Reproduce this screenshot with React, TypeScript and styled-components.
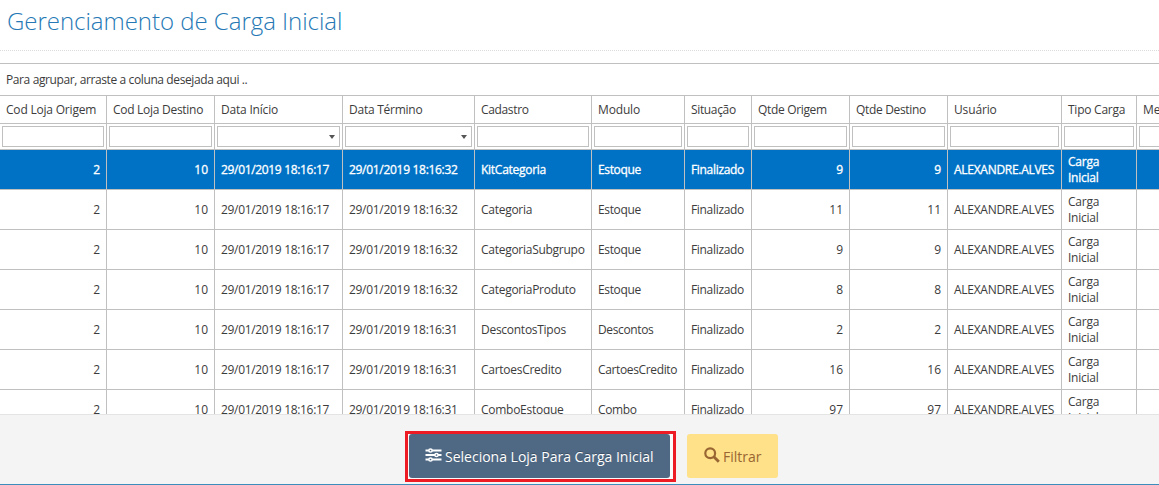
import React from "react";
import styled, { createGlobalStyle } from "styled-components";

const Global = createGlobalStyle`
  * { box-sizing: border-box; }
  body { margin: 0; background: #fff; overflow: hidden; }
`;

const Page = styled.div`
  display: flex;
  flex-direction: column;
  height: 485px;
  width: 100%;
  overflow: hidden;
  font-family: "Open Sans", "Noto Sans", sans-serif;
  font-size: 12px;
  color: #3c3c3c;
`;

const Header = styled.header`
  flex: none;
  height: 51px;
  padding: 3px 0 0 7px;
  border-bottom: 1px dotted #dcdcdc;
  margin-bottom: 12px;
`;

const Title = styled.h1`
  margin: 0;
  font-size: 24px;
  line-height: 36px;
  font-weight: 300;
  letter-spacing: -0.03px;
  color: #2679b5;
  white-space: nowrap;
`;

const Grid = styled.section`
  flex: 1;
  min-height: 0;
  overflow: hidden;
  border-top: 1px solid #c0c0c0;
`;

const GroupPanel = styled.div`
  height: 32px;
  padding-left: 6px;
  line-height: 31px;
  border-bottom: 1px solid #c0c0c0;
  white-space: nowrap;
`;

const Row = styled.div<{ $height: number; $selected?: boolean }>`
  display: grid;
  grid-template-columns: 107px 108px 128px 132px 117px 93px 67px 98px 98px 114px 75px 60px;
  width: 1197px;
  height: ${(p) => p.$height}px;
  background: ${(p) => (p.$selected ? "#0072c6" : "#fff")};
  color: ${(p) => (p.$selected ? "#fff" : "#3c3c3c")};
  -webkit-text-stroke: ${(p) => (p.$selected ? "0.3px #fff" : "0")};
`;

const Cell = styled.div<{ $right?: boolean }>`
  display: flex;
  align-items: center;
  justify-content: ${(p) => (p.$right ? "flex-end" : "flex-start")};
  padding: 0 6px;
  min-width: 0;
  line-height: 16px;
  border-right: 1px solid #c0c0c0;
  border-bottom: 1px solid #c0c0c0;
`;

const Label = styled.span<{ $spacing: number; $wrap?: boolean }>`
  letter-spacing: ${(p) => p.$spacing}px;
  white-space: ${(p) => (p.$wrap ? "normal" : "nowrap")};
`;

const FilterCell = styled.div`
  padding: 2px;
  border-right: 1px solid #c0c0c0;
  border-bottom: 1px solid #c0c0c0;
`;

const FilterBox = styled.div`
  display: flex;
  align-items: center;
  justify-content: flex-end;
  height: 21px;
  padding-right: 4px;
  border: 1px solid #c0c0c0;
`;

const Caret = styled.i`
  border: 3.5px solid transparent;
  border-top: 4px solid #555;
  border-bottom: 0;
`;

const Footer = styled.footer`
  flex: none;
  display: flex;
  align-items: flex-start;
  height: 71px;
  padding: 16px 0 0 405px;
  gap: 11px;
  background: #f4f4f4;
  border-top: 1px solid #e4e4e4;
  border-bottom: 1px solid #3d8dbc;
`;

const Highlight = styled.div`
  width: 271px;
  height: 51px;
  border: 3px solid #ed1c24;
  padding: 0 3px 0 1px;
  background: #fafafa;
`;

const Button = styled.button<{ $kind: "primary" | "filter" }>`
  display: flex;
  align-items: center;
  width: ${(p) => (p.$kind === "primary" ? 261 : 91)}px;
  height: 44px;
  margin: ${(p) => (p.$kind === "primary" ? "0" : "3px 0 0")};
  padding: 0 0 0 ${(p) => (p.$kind === "primary" ? 16 : 17)}px;
  gap: 3px;
  border: 0;
  border-radius: 3px;
  font-family: inherit;
  font-size: 14px;
  white-space: nowrap;
  color: ${(p) => (p.$kind === "primary" ? "#fff" : "#996633")};
  background: ${(p) => (p.$kind === "primary" ? "#4f6984" : "#fee188")};
  text-shadow: ${(p) => (p.$kind === "primary" ? "0 -1px 0 rgba(0,0,0,.25)" : "none")};
  svg { flex: none; display: block; margin-top: -2px; }
`;

type Column = { name: string; head: number; body: number; right?: boolean; menu?: boolean };

const columns: Column[] = [
  { name: "Cod Loja Origem", head: -0.2, body: 0, right: true },
  { name: "Cod Loja Destino", head: -0.28, body: 0, right: true },
  { name: "Data Início", head: -0.2, body: -0.33, menu: true },
  { name: "Data Término", head: -0.25, body: -0.3, menu: true },
  { name: "Cadastro", head: -0.35, body: -0.27 },
  { name: "Modulo", head: -0.15, body: -0.36 },
  { name: "Situação", head: -0.35, body: -0.32 },
  { name: "Qtde Origem", head: -0.33, body: 0, right: true },
  { name: "Qtde Destino", head: -0.33, body: 0, right: true },
  { name: "Usuário", head: -0.15, body: -0.28 },
  { name: "Tipo Carga", head: -0.25, body: -0.25 },
  { name: "Mensagem", head: 0, body: 0 },
];

const records: [string, string, string, string][] = [
  ["32", "KitCategoria", "Estoque", "9"],
  ["32", "Categoria", "Estoque", "11"],
  ["32", "CategoriaSubgrupo", "Estoque", "9"],
  ["32", "CategoriaProduto", "Estoque", "8"],
  ["31", "DescontosTipos", "Descontos", "2"],
  ["31", "CartoesCredito", "CartoesCredito", "16"],
  ["31", "ComboEstoque", "Combo", "97"],
];

const SlidersIcon = () => (
  <svg width="17" height="14" viewBox="0 0 17 14" fill="none" stroke="#fff">
    <path d="M0.5 2.5h16M0.5 7h16M0.5 11.5h16" strokeWidth="2" />
    <g fill="#4f6984" strokeWidth="1.5">
      <circle cx="5.5" cy="2.5" r="1.6" />
      <circle cx="11.5" cy="7" r="1.6" />
      <circle cx="5.5" cy="11.5" r="1.6" />
    </g>
  </svg>
);

const SearchIcon = () => (
  <svg width="16" height="16" viewBox="0 0 16 16" fill="none" stroke="#996633">
    <circle cx="6.2" cy="6.2" r="4.9" strokeWidth="2.2" />
    <path d="M9.8 9.8l5 5" strokeWidth="2.8" />
  </svg>
);

export default function App() {
  return (
    <Page>
      <Global />
      <Header>
        <Title>Gerenciamento de Carga Inicial</Title>
      </Header>
      <Grid>
        <GroupPanel>
          <Label $spacing={-0.39}>Para agrupar, arraste a coluna desejada aqui ..</Label>
        </GroupPanel>
        <Row $height={28}>
          {columns.map((c) => (
            <Cell key={c.name}>
              <Label $spacing={c.head}>{c.name}</Label>
            </Cell>
          ))}
        </Row>
        <Row $height={26}>
          {columns.map((c) => (
            <FilterCell key={c.name}>
              <FilterBox>{c.menu && <Caret />}</FilterBox>
            </FilterCell>
          ))}
        </Row>
        {records.map(([sec, cadastro, modulo, qtde], i) => {
          const values = [
            "2", "10", "29/01/2019 18:16:17", "29/01/2019 18:16:" + sec, cadastro, modulo,
            "Finalizado", qtde, qtde, "ALEXANDRE.ALVES", "Carga Inicial", "",
          ];
          return (
            <Row key={cadastro} $height={40} $selected={i === 0}>
              {values.map((v, k) => (
                <Cell key={k} $right={columns[k].right}>
                  <Label $spacing={columns[k].body} $wrap={k === 10}>{v}</Label>
                </Cell>
              ))}
            </Row>
          );
        })}
      </Grid>
      <Footer>
        <Highlight>
          <Button $kind="primary">
            <SlidersIcon />
            <span>Seleciona Loja Para Carga Inicial</span>
          </Button>
        </Highlight>
        <Button $kind="filter">
          <SearchIcon />
          <span>Filtrar</span>
        </Button>
      </Footer>
    </Page>
  );
}
